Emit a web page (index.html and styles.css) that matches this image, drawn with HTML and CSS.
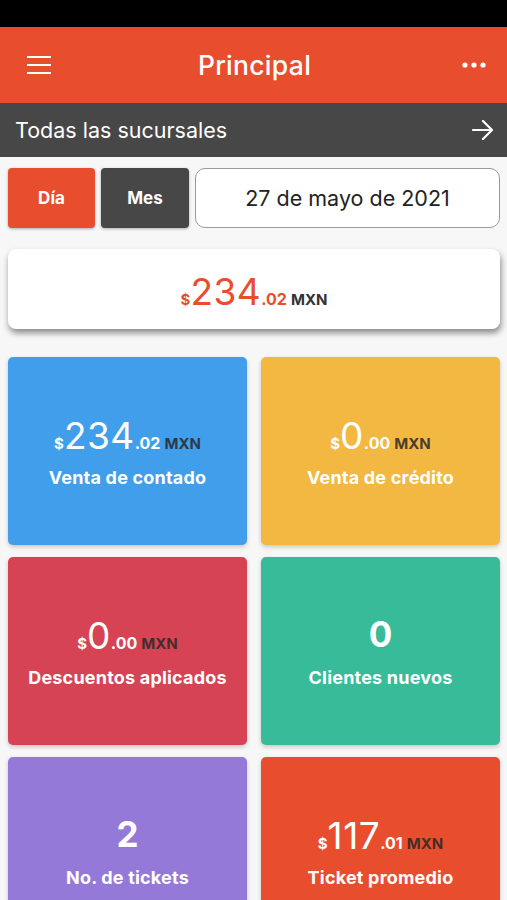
FILE: index.html
```html
<!DOCTYPE html>
<html lang="es">

<head>
  <meta charset="UTF-8" />
  <meta name="viewport" content="width=device-width, initial-scale=1.0" />
  <title>Principal</title>
  <link rel="stylesheet" href="styles.css">
</head>

<body>

  <div class="status-bar"></div>

  <!-- Header -->
  <header class="topbar">
    <button class="icon-btn" aria-label="Menú">
      <svg width="24" height="18" viewBox="0 0 24 18">
        <path d="M0 1h24M0 9h24M0 17h24" stroke="#fff" stroke-width="2.2" />
      </svg>
    </button>
    <h1>Principal</h1>
    <button class="icon-btn" aria-label="Más">
      <svg width="24" height="6" viewBox="0 0 24 6">
        <circle cx="3" cy="3" r="2.6" fill="#fff" />
        <circle cx="12" cy="3" r="2.6" fill="#fff" />
        <circle cx="21" cy="3" r="2.6" fill="#fff" />
      </svg>
    </button>
  </header>

  <div class="branch-bar">
    <span>Todas las sucursales</span>
    <svg width="22" height="20" viewBox="0 0 22 20">
      <path d="M1 10h19M11 1l9 9-9 9" fill="none" stroke="#fff" stroke-width="2.2" stroke-linecap="round"
        stroke-linejoin="round" />
    </svg>
  </div>

  <main class="content">
    <div class="filters">
      <button class="tab tab-active">Día</button>
      <button class="tab tab-dark">Mes</button>
      <div class="date-box">27 de mayo de 2021</div>
    </div>

    <div class="total-card">
      <div class="value red">
        <span class="cur">$</span><span class="big">234</span><span class="dec">.02</span>
        <span class="mxn">MXN</span>
      </div>
    </div>

    <div class="grid">
      <div class="card blue">
        <div class="value">
          <span class="cur">$</span><span class="big">234</span><span class="dec">.02</span>
          <span class="mxn">MXN</span>
        </div>
        <div class="label">Venta de contado</div>
      </div>
      <div class="card yellow">
        <div class="value">
          <span class="cur">$</span><span class="big">0</span><span class="dec">.00</span>
          <span class="mxn">MXN</span>
        </div>
        <div class="label">Venta de crédito</div>
      </div>
      <div class="card crimson">
        <div class="value">
          <span class="cur">$</span><span class="big">0</span><span class="dec">.00</span>
          <span class="mxn">MXN</span>
        </div>
        <div class="label">Descuentos aplicados</div>
      </div>
      <div class="card green">
        <div class="value"><span class="count">0</span></div>
        <div class="label">Clientes nuevos</div>
      </div>
      <div class="card purple">
        <div class="value"><span class="count">2</span></div>
        <div class="label">No. de tickets</div>
      </div>
      <div class="card orange">
        <div class="value">
          <span class="cur">$</span><span class="big">117</span><span class="dec">.01</span>
          <span class="mxn">MXN</span>
        </div>
        <div class="label">Ticket promedio</div>
      </div>
    </div>
  </main>

</body>

</html>
```

FILE: styles.css
```css
* {
  margin: 0;
  padding: 0;
  box-sizing: border-box;
}

body {
  font-family: "Inter", "Noto Sans", sans-serif;
  background-color: #F7F7F7;
  width: 507px;
  height: 900px;
  overflow: hidden;
}

.status-bar {
  height: 27px;
  background-color: #000;
}

.topbar {
  height: 76px;
  background-color: #E84E2E;
  display: flex;
  align-items: center;
  justify-content: space-between;
  padding: 0 21px 0 27px;
}

.topbar h1 {
  font-size: 26.5px;
  font-weight: 500;
  color: #fff;
  letter-spacing: 0.3px;
  margin-right: 4px;
}

.icon-btn {
  background: none;
  border: none;
  display: flex;
  align-items: center;
}

.branch-bar {
  height: 54px;
  background-color: #474747;
  color: #fff;
  display: flex;
  align-items: center;
  justify-content: space-between;
  padding: 0 13px 0 15px;
  font-size: 21.5px;
}

.content {
  padding: 11px 7px 0 8px;
}

.filters {
  display: flex;
  gap: 6px;
  height: 60px;
}

.tab {
  width: 87px;
  border: none;
  border-radius: 4px;
  color: #fff;
  font-family: inherit;
  font-size: 17px;
  font-weight: 700;
  box-shadow: 0 1px 3px rgba(0, 0, 0, 0.3);
}

.tab-active {
  background-color: #E84E2E;
}

.tab-dark {
  background-color: #474747;
  width: 88px;
}

.date-box {
  flex: 1;
  border: 1px solid #9a9a9a;
  border-radius: 10px;
  background-color: #fff;
  display: flex;
  align-items: center;
  justify-content: center;
  font-size: 21.5px;
  color: #222;
}

.total-card {
  margin-top: 21px;
  height: 80px;
  background-color: #fff;
  border-radius: 8px;
  box-shadow: 1px 4px 6px rgba(0, 0, 0, 0.45);
  display: flex;
  align-items: center;
  justify-content: center;
  padding-top: 4px;
}

.red {
  color: #E84E2E;
}

.cur {
  font-size: 15px;
  font-weight: 700;
}

.big {
  font-size: 37px;
  font-weight: 400;
  letter-spacing: 0.5px;
}

.dec {
  font-size: 16px;
  font-weight: 700;
}

.mxn {
  font-size: 15px;
  font-weight: 700;
  color: #333;
  margin-left: 4px;
}

.card .mxn {
  color: rgba(40, 40, 40, 0.85);
}

.grid {
  margin-top: 28px;
  display: grid;
  grid-template-columns: 1fr 1fr;
  column-gap: 14px;
  row-gap: 12px;
}

.card {
  height: 188px;
  border-radius: 5px;
  box-shadow: 0 2px 4px rgba(0, 0, 0, 0.2);
  color: #fff;
  display: flex;
  flex-direction: column;
  align-items: center;
  justify-content: center;
  gap: 10px;
  padding-bottom: 2px;
}

.value {
  display: flex;
  align-items: baseline;
  height: 44px;
}

.count {
  font-size: 35px;
  font-weight: 700;
}

.label {
  font-size: 18px;
  font-weight: 700;
  letter-spacing: 0.2px;
}

.blue {
  background-color: #419EEB;
}

.yellow {
  background-color: #F2B842;
}

.crimson {
  background-color: #D64354;
}

.green {
  background-color: #37BB99;
}

.purple {
  background-color: #9479D9;
}

.orange {
  background-color: #E84E2E;
}
```
